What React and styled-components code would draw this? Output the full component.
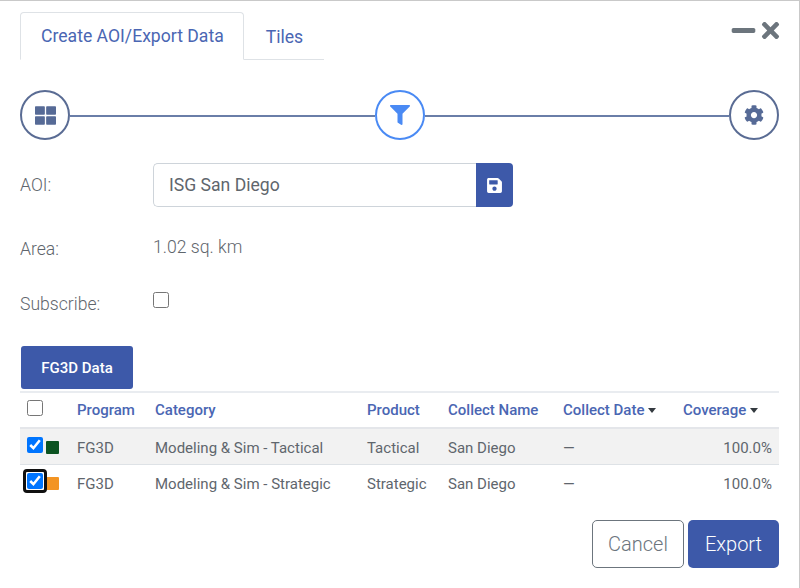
import React from "react";
import styled, { createGlobalStyle } from "styled-components";
import { FaThLarge, FaFilter, FaCog, FaSave, FaTimes, FaMinus } from "react-icons/fa";

const Global = createGlobalStyle`
  html, body { margin: 0; padding: 0; background: #fff; }
  body { font-family: Roboto, "Liberation Sans", sans-serif; color: #6c757d; }
`;

const Dialog = styled.div`
  box-sizing: border-box;
  width: 800px;
  height: 588px;
  padding: 11px 20px 0 20px;
  background: #fff;
  border: 1px solid #c9c9c9;
  border-left: none;
  border-bottom: none;
  display: flex;
  flex-direction: column;
`;

const Header = styled.div`
  display: flex;
  justify-content: space-between;
  align-items: flex-start;
`;
const Tabs = styled.div`
  display: flex;
  width: 304px;
  height: 48px;
  border-bottom: 1px solid #dee2e6;
  box-sizing: border-box;
`;
const Tab = styled.div`
  box-sizing: border-box;
  flex: none;
  height: 48px;
  padding: ${(props) => (props.$active ? "0 19px 0 20px" : "0 20px 0 21px")};
  display: flex;
  align-items: center;
  white-space: nowrap;
  font-size: 17.6px;
  color: #4a66b3;
  background: ${(props) => (props.$active ? "#fff" : "transparent")};
  border: 1px solid ${(props) => (props.$active ? "#dee2e6" : "transparent")};
  border-bottom: ${(props) => (props.$active ? "1px solid #fff" : "none")};
  border-radius: 4px 4px 0 0;
`;
const WindowButtons = styled.div`
  display: flex;
  align-items: center;
  gap: 1px;
  color: #6c757d;
  margin: 5px -4px 0 0;
`;

const Stepper = styled.div`
  display: flex;
  align-items: center;
  margin-top: 30px;
`;
const Step = styled.div`
  box-sizing: border-box;
  width: 50px;
  height: 50px;
  border-radius: 50%;
  flex: none;
  display: flex;
  align-items: center;
  justify-content: center;
  border: 2px solid ${(props) => (props.$active ? "#4a8af4" : "#5a6c94")};
  color: ${(props) => (props.$active ? "#4a8af4" : "#566a96")};
`;
const StepLine = styled.div`
  flex: 1;
  height: 2px;
  margin-top: 2px;
  background: #6a7ea8;
`;

const Row = styled.div`
  display: grid;
  grid-template-columns: 133px 1fr;
  align-items: ${(props) => props.$align || "center"};
  margin-top: ${(props) => props.$top}px;
`;
const Label = styled.div`
  font-size: 17.6px;
  line-height: 19px;
  font-weight: 300;
  color: #5f666d;
  margin-top: ${(props) => props.$top || 0}px;
`;
const InputGroup = styled.div`
  display: flex;
  width: 360px;
  height: 44px;
`;
const TextInput = styled.div`
  flex: 1;
  box-sizing: border-box;
  border: 1px solid #ced4da;
  border-right: none;
  border-radius: 5px 0 0 5px;
  padding: 0 15px;
  display: flex;
  align-items: center;
  font-size: 17.6px;
  color: #5f666d;
`;
const SaveButton = styled.div`
  width: 37px;
  background: #3d59a9;
  color: #fff;
  border-radius: 0 4px 4px 0;
  display: flex;
  align-items: center;
  justify-content: center;
`;
const AreaValue = styled.div`
  font-size: 17.6px;
  line-height: 19px;
  font-weight: 300;
  color: #5f666d;
  margin-top: -4px;
`;
const Check = styled.input.attrs({ type: "checkbox" })`
  width: 16px;
  height: 16px;
  margin: 0;
  display: block;
`;
const CheckHolder = styled.span`
  position: relative;
  display: block;
  flex: none;

  &::after {
    content: ${(props) => (props.$focused ? '""' : "none")};
    position: absolute;
    inset: -4px;
    border: 3px solid #101010;
    border-radius: 4px;
  }
`;

const DataTabs = styled.div`
  margin-top: 32px;
`;
const DataTab = styled.div`
  margin-left: 1px;
  width: 112px;
  height: 43px;
  box-sizing: border-box;
  background: #3d59a9;
  color: #fff;
  border-radius: 3px;
  font-size: 15px;
  font-weight: 500;
  display: flex;
  align-items: center;
  justify-content: center;
`;

const Table = styled.div`
  margin-top: 2px;
  border-top: 2px solid #e9ecf0;
`;
const HeadRow = styled.div`
  display: grid;
  grid-template-columns: 57px 78px 212px 81px 115px 120px 96px;
  align-items: center;
  height: 36px;
  box-sizing: border-box;
  border-bottom: 2px solid #e4e6ea;
`;
const TableRow = styled(HeadRow)`
  border-bottom: none;
  background: ${(props) => (props.$shade ? "#f2f2f2" : "transparent")};
  box-shadow: ${(props) => (props.$shade ? "inset 0 -1px 0 #dee2e6" : "none")};
`;
const HeadCell = styled.div`
  font-size: 15px;
  font-weight: 500;
  color: #4a66b3;
  display: flex;
  align-items: center;
  gap: 4px;
  white-space: nowrap;
`;
const Caret = styled.span`
  width: 0;
  height: 0;
  border-left: 4.5px solid transparent;
  border-right: 4.5px solid transparent;
  border-top: 5px solid #343a40;
`;
const Cell = styled.div`
  font-size: 15px;
  color: #5f666d;
  white-space: nowrap;
  margin-top: 1px;
  text-align: ${(props) => (props.$right ? "right" : "left")};
  padding-right: ${(props) => (props.$right ? "7px" : "0")};
`;
const SelectCell = styled.div`
  display: flex;
  align-items: flex-start;
  gap: 3px;
  padding-left: 7px;
  margin-top: ${(props) => props.$offset || 0}px;
`;
const Swatch = styled.span`
  width: 13px;
  height: 13px;
  margin-top: 4px;
  border-radius: 1px;
  background: ${(props) => props.$color};
`;

const Footer = styled.div`
  display: flex;
  justify-content: flex-end;
  gap: 4px;
  margin-top: 19px;
`;
const Button = styled.div`
  box-sizing: border-box;
  width: ${(props) => props.$width}px;
  height: 48px;
  border-radius: 5px;
  display: flex;
  align-items: center;
  justify-content: center;
  font-size: 20px;
  font-weight: 300;
  color: ${(props) => (props.$primary ? "#fff" : "#6c757d")};
  background: ${(props) => (props.$primary ? "#3d59a9" : "#fff")};
  border: ${(props) => (props.$primary ? "none" : "1px solid #6c757d")};
`;

const rows = [
  { color: "#0b5321", category: "Modeling & Sim - Tactical", product: "Tactical", shade: true },
  { color: "#f39423", category: "Modeling & Sim - Strategic", product: "Strategic", focused: true },
];

export default function App() {
  return (
    <>
      <Global />
      <Dialog>
        <Header>
          <Tabs>
            <Tab $active>Create AOI/Export Data</Tab>
            <Tab>Tiles</Tab>
          </Tabs>
          <WindowButtons>
            <FaMinus size={27} />
            <FaTimes size={25} />
          </WindowButtons>
        </Header>

        <Stepper>
          <Step><FaThLarge size={21} /></Step>
          <StepLine />
          <Step $active><FaFilter size={20} /></Step>
          <StepLine />
          <Step><FaCog size={20} /></Step>
        </Stepper>

        <Row $top={23}>
          <Label>AOI:</Label>
          <InputGroup>
            <TextInput>ISG San Diego</TextInput>
            <SaveButton><FaSave size={17} /></SaveButton>
          </InputGroup>
        </Row>
        <Row $top={33}>
          <Label>Area:</Label>
          <AreaValue>1.02 sq. km</AreaValue>
        </Row>
        <Row $top={33} $align="start">
          <Label $top={3}>Subscribe:</Label>
          <Check />
        </Row>

        <DataTabs>
          <DataTab>FG3D Data</DataTab>
        </DataTabs>

        <Table>
          <HeadRow>
            <SelectCell $offset={-5}><Check /></SelectCell>
            <HeadCell>Program</HeadCell>
            <HeadCell>Category</HeadCell>
            <HeadCell>Product</HeadCell>
            <HeadCell>Collect Name</HeadCell>
            <HeadCell>Collect Date <Caret /></HeadCell>
            <HeadCell>Coverage <Caret /></HeadCell>
          </HeadRow>
          {rows.map((row) => (
            <TableRow key={row.product} $shade={row.shade}>
              <SelectCell $offset={-3}>
                <CheckHolder $focused={row.focused}>
                  <Check defaultChecked />
                </CheckHolder>
                <Swatch $color={row.color} />
              </SelectCell>
              <Cell>FG3D</Cell>
              <Cell>{row.category}</Cell>
              <Cell>{row.product}</Cell>
              <Cell>San Diego</Cell>
              <Cell>—</Cell>
              <Cell $right>100.0%</Cell>
            </TableRow>
          ))}
        </Table>

        <Footer>
          <Button $width={92}>Cancel</Button>
          <Button $width={91} $primary>Export</Button>
        </Footer>
      </Dialog>
    </>
  );
}
